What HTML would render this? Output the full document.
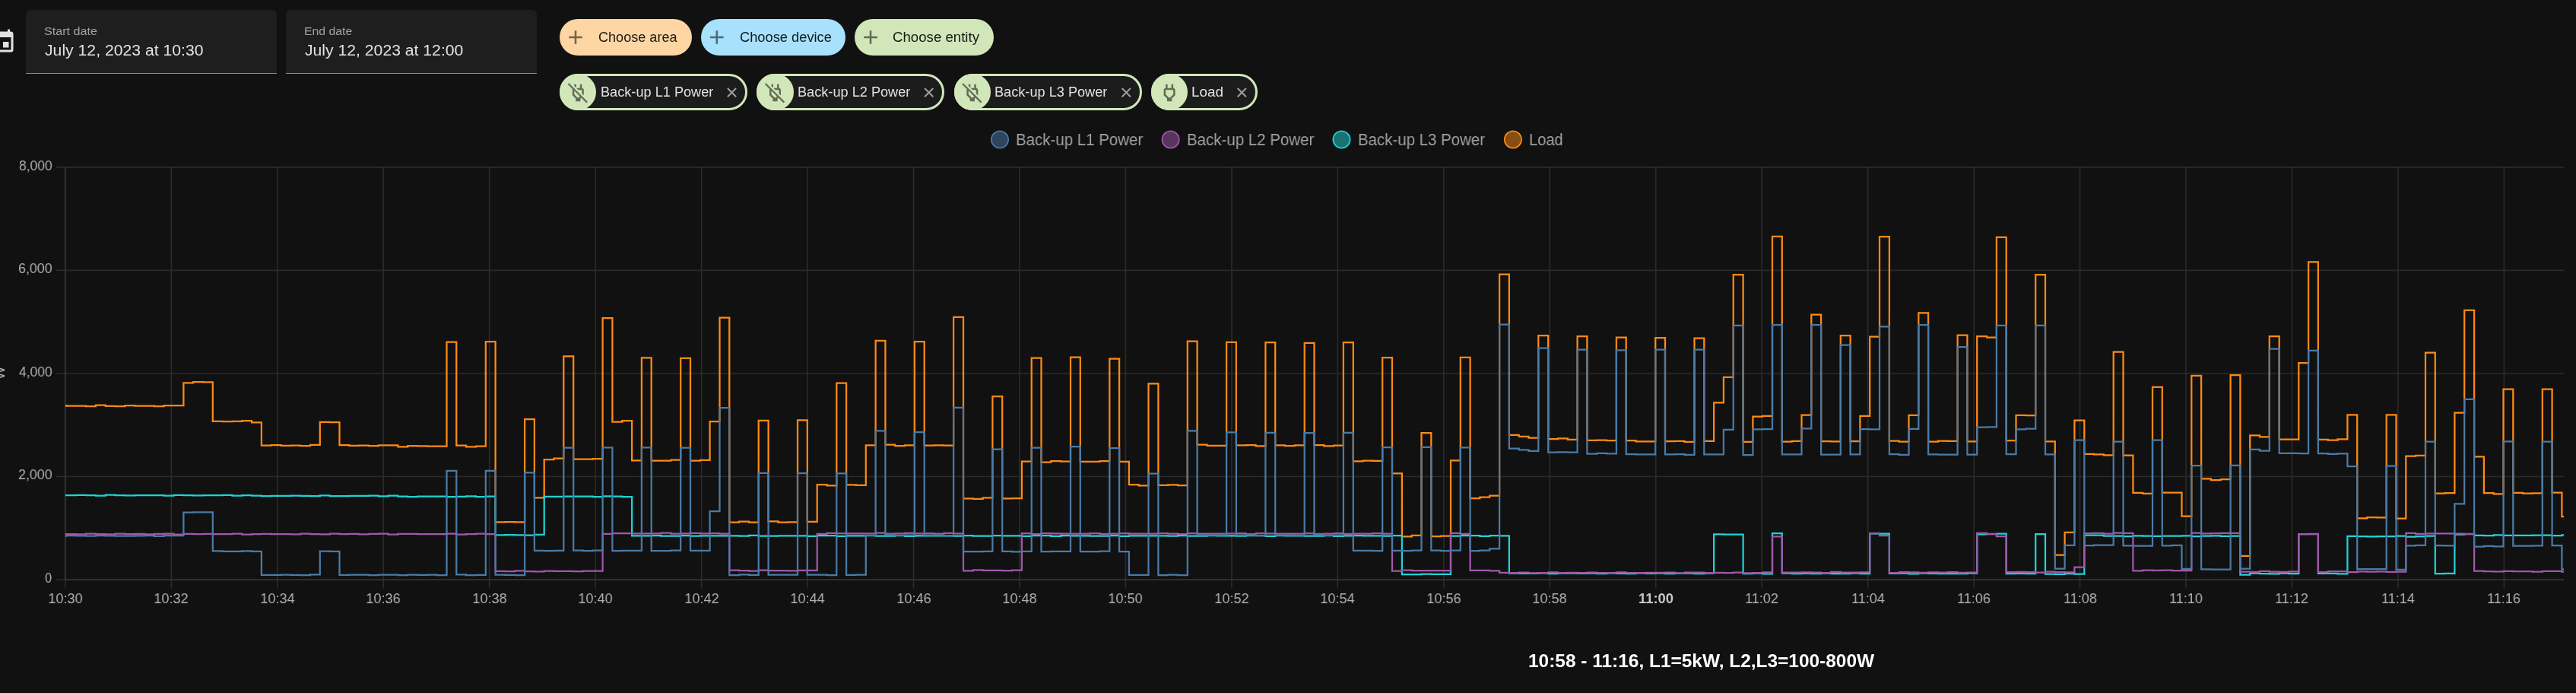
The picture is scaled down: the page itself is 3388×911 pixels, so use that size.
<!DOCTYPE html>
<html lang="en"><head><meta charset="utf-8"><title>History</title>
<style>
html,body{margin:0;padding:0;background:#111111;}
body{width:3388px;height:911px;position:relative;overflow:hidden;font-family:"Liberation Sans", sans-serif;}
.t{position:absolute;white-space:nowrap;line-height:1;transform-origin:0 0;will-change:transform;font-family:"Liberation Sans", sans-serif;}
.field{position:absolute;top:13px;height:83px;background:#1e1e1e;border-radius:6px 6px 0 0;border-bottom:1.5px solid #8d8d8d;box-sizing:content-box;}
.chip{position:absolute;height:48.4px;border-radius:24.2px;box-sizing:border-box;}
.echip{background:#1c1c1c;border:3.2px solid #d2e7b9;}
.ico{position:absolute;width:48.4px;height:48.4px;border-radius:50%;background:#d2e7b9;}
svg{position:absolute;left:0;top:0;overflow:visible;}
</style></head><body>
<svg width="36" height="36" viewBox="0 0 24 24" style="left:-14px;top:36.7px"><path fill="#e1e1e1" d="M19,19H5V8H19M16,1V3H8V1H6V3H5C3.89,3 3,3.89 3,5V19A2,2 0 0,0 5,21H19A2,2 0 0,0 21,19V5C21,3.89 20.1,3 19,3H18V1M17,12H12V17H17V12Z"/></svg>
<div class="field" style="left:33.9px;width:330.4px"></div>
<div class="field" style="left:375.9px;width:330.2px"></div>
<div class="chip" style="left:736.1px;top:24.7px;width:174.1px;background:#fed6a4"></div>
<div class="chip" style="left:921.8px;top:24.7px;width:190.5px;background:#a8e1fb"></div>
<div class="chip" style="left:1124px;top:24.7px;width:183px;background:#d2e7b9"></div>
<div class="chip echip" style="left:736.1px;top:96.6px;width:246.9px"></div>
<div class="ico" style="left:736.1px;top:96.6px"></div>
<div class="chip echip" style="left:995.3px;top:96.6px;width:246.3px"></div>
<div class="ico" style="left:995.3px;top:96.6px"></div>
<div class="chip echip" style="left:1254.6px;top:96.6px;width:247.0px"></div>
<div class="ico" style="left:1254.6px;top:96.6px"></div>
<div class="chip echip" style="left:1513.9px;top:96.6px;width:140.0px"></div>
<div class="ico" style="left:1513.9px;top:96.6px"></div>
<svg width="3388" height="210" viewBox="0 0 3388 210">
<path d="M748.2 49H765.8M757.0 40.2V57.8" stroke="#75634c" stroke-width="2.6" fill="none"/>
<path d="M934.0 49H951.6M942.8 40.2V57.8" stroke="#4e6874" stroke-width="2.6" fill="none"/>
<path d="M1136.2 49H1153.8M1145.0 40.2V57.8" stroke="#616a55" stroke-width="2.6" fill="none"/>
<path d="M956.9 116.1L968.1 127.3M968.1 116.1L956.9 127.3" stroke="#9c9c9c" stroke-width="2.1" fill="none"/>
<path d="M1216.1 116.1L1227.3 127.3M1227.3 116.1L1216.1 127.3" stroke="#9c9c9c" stroke-width="2.1" fill="none"/>
<path d="M1475.7 116.1L1486.9 127.3M1486.9 116.1L1475.7 127.3" stroke="#9c9c9c" stroke-width="2.1" fill="none"/>
<path d="M1627.7 116.1L1638.9 127.3M1638.9 116.1L1627.7 127.3" stroke="#9c9c9c" stroke-width="2.1" fill="none"/>
<g transform="translate(745.3 107.0) scale(1.25)"><path fill="#626c55" d="M22.11 21.46L2.39 1.73L1.11 3L6.25 8.14C6.1 8.41 6 8.7 6 9V14.5L9.5 18V21H14.5V18L15.31 17.2L20.84 22.73L22.11 21.46M13.09 16.59L12.67 17H11.33L10.91 16.59L8 13.67V9.89L13.89 15.78L13.09 16.59M12.2 9L8 4.8V3H10V7H14V3H16V7C17 7 18 8 18 9V14.5L17.8 14.69L16 12.89V9.09C16 9.06 15.95 9 15.92 9H12.2Z"/></g>
<g transform="translate(1004.5 107.0) scale(1.25)"><path fill="#626c55" d="M22.11 21.46L2.39 1.73L1.11 3L6.25 8.14C6.1 8.41 6 8.7 6 9V14.5L9.5 18V21H14.5V18L15.31 17.2L20.84 22.73L22.11 21.46M13.09 16.59L12.67 17H11.33L10.91 16.59L8 13.67V9.89L13.89 15.78L13.09 16.59M12.2 9L8 4.8V3H10V7H14V3H16V7C17 7 18 8 18 9V14.5L17.8 14.69L16 12.89V9.09C16 9.06 15.95 9 15.92 9H12.2Z"/></g>
<g transform="translate(1263.8 107.0) scale(1.25)"><path fill="#626c55" d="M22.11 21.46L2.39 1.73L1.11 3L6.25 8.14C6.1 8.41 6 8.7 6 9V14.5L9.5 18V21H14.5V18L15.31 17.2L20.84 22.73L22.11 21.46M13.09 16.59L12.67 17H11.33L10.91 16.59L8 13.67V9.89L13.89 15.78L13.09 16.59M12.2 9L8 4.8V3H10V7H14V3H16V7C17 7 18 8 18 9V14.5L17.8 14.69L16 12.89V9.09C16 9.06 15.95 9 15.92 9H12.2Z"/></g>
<g transform="translate(1523.1 107.0) scale(1.25)"><path fill="#626c55" d="M16 7V3H14V7H10V3H8V7C7 7 6 8 6 9V14.5L9.5 18V21H14.5V18L18 14.5V9C18 8 17 7 16 7M16 13.67L13.09 16.59L12.67 17H11.33L10.91 16.59L8 13.67V9.09C8 9.06 8.06 9 8.09 9H15.92C15.95 9 16 9.06 16 9.09V13.67Z"/></g>
<circle cx="1315.0" cy="183.5" r="11.2" fill="#4b7aa6" fill-opacity="0.5" stroke="#4b7aa6" stroke-width="1.6"/>
<circle cx="1539.6" cy="183.5" r="11.2" fill="#a058ab" fill-opacity="0.5" stroke="#a058ab" stroke-width="1.6"/>
<circle cx="1764.5" cy="183.5" r="11.2" fill="#1ed4d7" fill-opacity="0.5" stroke="#1ed4d7" stroke-width="1.6"/>
<circle cx="1989.9" cy="183.5" r="11.2" fill="#ff8a14" fill-opacity="0.5" stroke="#ff8a14" stroke-width="1.6"/>
</svg>
<svg width="3388" height="911" viewBox="0 0 3388 911">
<path d="M73.7 219.90H3372.1M73.7 355.42H3372.1M73.7 490.95H3372.1M73.7 626.48H3372.1M225.32 219.9V773.4M364.78 219.9V773.4M504.23 219.9V773.4M643.69 219.9V773.4M783.15 219.9V773.4M922.61 219.9V773.4M1062.07 219.9V773.4M1201.53 219.9V773.4M1340.98 219.9V773.4M1480.44 219.9V773.4M1619.90 219.9V773.4M1759.36 219.9V773.4M1898.82 219.9V773.4M2038.28 219.9V773.4M2177.73 219.9V773.4M2317.19 219.9V773.4M2456.65 219.9V773.4M2596.11 219.9V773.4M2735.57 219.9V773.4M2875.03 219.9V773.4M3014.48 219.9V773.4M3153.94 219.9V773.4M3293.40 219.9V773.4" stroke="#2b2b2b" stroke-width="1.6" fill="none"/>
<path d="M73.7 762.00H85.86M85.86 762.00V773.4" stroke="#2b2b2b" stroke-width="1.6" fill="none"/>
<path d="M85.86 219.9V762.00H3372.1" stroke="#393939" stroke-width="1.7" fill="none"/>
<path d="M85.9 533.2H87.5V533.7H100.3V533.6H113.2V534.0H126.0V532.7H138.8V533.9H151.6V534.1H164.4V533.0H177.3V533.7H190.1V533.5H202.9V534.1H215.7V533.1H228.5V533.2H241.4V503.4H254.2V502.0H267.0V502.4H279.8V553.9H292.6V554.1H305.5V553.9H318.3V553.0H331.1V555.4H343.9V585.7H356.7V585.2H369.6V585.9H382.4V585.7H395.2V586.1H408.0V584.9H420.8V554.9H433.7V555.2H446.5V585.0H459.3V585.8H472.1V585.7H484.9V586.1H497.8V585.3H510.6V585.3H523.4V587.4H536.2V586.0H549.0V586.4H561.9V586.6H574.7V586.7H587.5V449.6H600.3V585.7H613.1V587.3H626.0V586.5H638.8V449.0H651.6V686.3H664.4V686.0H677.2V686.3H690.1V551.1H702.9V654.3H715.7V604.0H728.5V602.7H741.3V468.3H754.2V603.5H767.0V603.7H779.8V603.1H792.6V418.1H805.4V554.7H818.3V553.2H831.1V605.3H843.9V470.4H856.7V605.6H869.5V605.5H882.4V604.7H895.2V470.9H908.0V605.5H920.8V604.9H933.6V554.1H946.5V417.7H959.3V686.5H972.1V685.6H984.9V686.5H997.7V552.8H1010.6V685.4H1023.4V686.5H1036.2V686.3H1049.0V552.3H1061.8V685.9H1074.7V637.0H1087.5V638.3H1100.3V503.5H1113.1V637.3H1125.9V637.9H1138.8V585.3H1151.6V447.8H1164.4V584.6H1177.2V586.0H1190.0V585.3H1202.9V449.0H1215.7V585.7H1228.5V585.3H1241.3V585.5H1254.1V416.9H1267.0V655.4H1279.8V655.8H1292.6V654.3H1305.4V521.2H1318.2V655.3H1331.1V655.2H1343.9V606.6H1356.7V470.5H1369.5V607.7H1382.3V606.2H1395.2V606.6H1408.0V469.5H1420.8V606.8H1433.6V606.9H1446.4V606.2H1459.3V471.6H1472.1V606.8H1484.9V637.1H1497.7V638.3H1510.5V504.3H1523.4V637.9H1536.2V637.3H1549.0V638.0H1561.8V448.7H1574.6V584.7H1587.5V585.8H1600.3V585.8H1613.1V449.9H1625.9V585.3H1638.7V585.2H1651.6V586.4H1664.4V450.2H1677.2V585.3H1690.0V586.1H1702.8V585.4H1715.7V450.8H1728.5V585.0H1741.3V586.3H1754.1V585.6H1766.9V450.0H1779.8V606.3H1792.6V605.7H1805.4V605.8H1818.2V470.0H1831.0V622.3H1843.9V705.4H1856.7V703.9H1869.5V569.1H1882.3V705.1H1895.1V704.7H1908.0V605.3H1920.8V469.9H1933.6V655.2H1946.4V653.7H1959.2V651.6H1972.1V360.5H1984.9V571.8H1997.7V573.9H2010.5V575.5H2023.3V441.0H2036.2V577.2H2049.0V576.4H2061.8V577.9H2074.6V442.2H2087.4V578.9H2100.3V578.6H2113.1V579.1H2125.9V443.6H2138.7V579.1H2151.5V580.4H2164.4V580.4H2177.2V444.2H2190.0V580.0H2202.8V579.8H2215.6V580.9H2228.5V444.5H2241.3V579.8H2254.1V529.4H2266.9V495.8H2279.7V361.0H2292.6V580.9H2305.4V547.5H2318.2V546.9H2331.0V310.9H2343.8V580.6H2356.7V579.8H2369.5V545.5H2382.3V413.7H2395.1V580.0H2407.9V580.4H2420.8V441.2H2433.6V580.2H2446.4V546.9H2459.2V442.6H2472.0V311.1H2484.9V579.6H2497.7V580.6H2510.5V545.9H2523.3V411.4H2536.1V580.6H2549.0V579.5H2561.8V579.8H2574.6V440.6H2587.4V580.4H2600.2V442.0H2613.1V443.5H2625.9V311.8H2638.7V579.0H2651.5V545.9H2664.3V546.0H2677.2V361.0H2690.0V580.3H2702.8V729.6H2715.6V699.8H2728.4V552.7H2741.3V596.9H2754.1V597.3H2766.9V598.3H2779.7V462.6H2792.5V598.7H2805.4V647.9H2818.2V648.9H2831.0V508.8H2843.8V647.7H2856.6V647.5H2869.5V678.5H2882.3V493.9H2895.1V629.4H2907.9V631.0H2920.7V630.1H2933.6V493.0H2946.4V730.9H2959.2V572.3H2972.0V574.3H2984.8V442.2H2997.7V577.6H3010.5V577.7H3023.3V477.1H3036.1V344.3H3048.9V577.8H3061.8V578.5H3074.6V577.3H3087.4V545.4H3100.2V681.3H3113.0V680.0H3125.9V680.4H3138.7V545.4H3151.5V681.5H3164.3V599.7H3177.1V598.9H3190.0V463.7H3202.8V648.5H3215.6V648.2H3228.4V542.6H3241.2V407.8H3254.1V600.3H3266.9V648.2H3279.7V649.4H3292.5V511.6H3305.3V647.9H3318.2V648.5H3331.0V648.3H3343.8V511.7H3356.6V647.5H3369.4V679.0H3372.1" stroke="#ff8a14" stroke-width="2.25" fill="none" stroke-linejoin="miter"/>
<path d="M85.9 651.1H87.5V651.2H100.3V650.9H113.2V651.2H126.0V651.5H138.8V650.7H151.6V651.2H164.4V651.3H177.3V651.1H190.1V651.1H202.9V651.0H215.7V651.6H228.5V650.9H241.4V651.0H254.2V651.4H267.0V651.1H279.8V651.2H292.6V650.9H305.5V651.5H318.3V651.2H331.1V651.5H343.9V652.2H356.7V651.9H369.6V651.9H382.4V651.7H395.2V651.9H408.0V652.2H420.8V651.4H433.7V652.0H446.5V652.0H459.3V651.8H472.1V651.8H484.9V651.7H497.8V652.3H510.6V651.6H523.4V652.5H536.2V653.0H549.0V652.6H561.9V652.7H574.7V652.5H587.5V653.0H600.3V652.8H613.1V652.3H626.0V653.0H638.8V652.7H651.6V703.3H664.4V703.2H677.2V703.4H690.1V703.7H702.9V702.9H715.7V652.8H728.5V652.9H741.3V652.6H754.2V652.7H767.0V652.5H779.8V653.1H792.6V652.4H805.4V652.5H818.3V653.0H831.1V704.3H843.9V704.4H856.7V704.2H869.5V704.7H882.4V704.5H895.2V704.0H908.0V704.7H920.8V704.4H933.6V704.3H946.5V704.3H959.3V704.4H972.1V704.7H984.9V703.9H997.7V704.5H1010.6V704.6H1023.4V704.3H1036.2V704.4H1049.0V704.3H1061.8V704.8H1074.7V704.2H1087.5V704.2H1100.3V704.8H1113.1V704.3H1125.9V704.4H1138.8V704.2H1151.6V704.7H1164.4V704.5H1177.2V704.0H1190.0V704.8H1202.9V704.4H1215.7V704.3H1228.5V704.3H1241.3V704.4H1254.1V704.7H1267.0V704.0H1279.8V704.5H1292.6V704.6H1305.4V704.2H1318.2V704.4H1331.1V704.3H1343.9V704.8H1356.7V704.2H1369.5V704.2H1382.3V704.8H1395.2V704.2H1408.0V704.4H1420.8V704.3H1433.6V704.6H1446.4V704.5H1459.3V704.0H1472.1V704.8H1484.9V704.4H1497.7V704.3H1510.5V704.4H1523.4V704.4H1536.2V704.7H1549.0V704.0H1561.8V704.5H1574.6V704.7H1587.5V704.2H1600.3V704.4H1613.1V704.3H1625.9V704.7H1638.7V704.2H1651.6V704.2H1664.4V704.8H1677.2V704.2H1690.0V704.4H1702.8V704.3H1715.7V704.6H1728.5V704.5H1741.3V704.0H1754.1V704.8H1766.9V704.4H1779.8V704.2H1792.6V704.4H1818.2V704.7H1831.0V704.0H1843.9V755.0H1856.7V755.2H1869.5V754.6H1882.3V754.9H1895.1V754.8H1908.0V704.7H1920.8V704.2H1933.6V704.2H1946.4V704.8H1959.2V704.2H1972.1V704.3H1984.9V753.7H1997.7V753.9H2010.5V753.8H2023.3V753.3H2036.2V754.1H2049.0V753.7H2061.8V753.5H2074.6V753.8H2087.4V753.7H2100.3V754.0H2113.1V753.3H2125.9V753.9H2138.7V754.0H2151.5V753.4H2164.4V753.8H2177.2V753.7H2190.0V754.0H2202.8V753.5H2228.5V754.2H2241.3V753.5H2254.1V702.4H2266.9V702.5H2279.7V702.6H2292.6V754.0H2305.4V753.5H2318.2V754.3H2331.0V701.0H2343.8V753.7H2356.7V754.0H2369.5V753.9H2382.3V754.1H2395.1V753.6H2407.9V754.1H2420.8V754.2H2433.6V753.6H2446.4V754.0H2459.2V701.4H2472.0V701.6H2484.9V753.8H2497.7V753.7H2510.5V754.4H2523.3V753.7H2536.1V753.9H2549.0V754.0H2561.8V754.0H2574.6V754.0H2587.4V753.6H2600.2V702.4H2613.1V702.0H2625.9V701.7H2638.7V754.1H2651.5V753.9H2664.3V754.1H2677.2V702.1H2690.0V754.7H2702.8V754.9H2715.6V754.2H2728.4V754.6H2741.3V703.5H2754.1V703.6H2766.9V704.5H2779.7V704.5H2792.5V705.1H2805.4V704.4H2818.2V704.6H2831.0V704.8H2843.8V704.7H2869.5V704.3H2882.3V705.1H2895.1V704.7H2907.9V704.4H2920.7V704.9H2933.6V704.7H2946.4V755.7H2959.2V753.6H2972.0V754.0H2984.8V754.3H2997.7V753.5H3010.5V754.0H3023.3V702.1H3036.1V702.1H3048.9V753.8H3061.8V753.8H3074.6V754.4H3087.4V704.8H3100.2V705.0H3113.0V705.3H3125.9V705.1H3138.7V705.1H3151.5V704.7H3164.3V705.5H3177.1V705.1H3190.0V704.7H3202.8V754.2H3215.6V753.9H3228.4V702.5H3241.2V702.2H3254.1V703.8H3266.9V704.0H3279.7V703.3H3292.5V703.9H3305.3V703.8H3318.2V703.8H3331.0V703.6H3343.8V703.6H3356.6V704.2H3369.4V703.4H3372.1" stroke="#1ed4d7" stroke-width="2.25" fill="none" stroke-linejoin="miter"/>
<path d="M85.9 702.0H87.5V702.0H100.3V702.4H113.2V701.5H126.0V702.1H138.8V702.4H151.6V701.7H164.4V702.0H177.3V701.9H190.1V702.4H202.9V701.8H215.7V701.7H228.5V702.6H241.4V701.8H254.2V702.0H267.0V701.9H279.8V702.2H292.6V702.2H305.5V701.5H318.3V702.5H331.1V702.1H343.9V701.8H356.7V702.1H369.6V702.0H382.4V702.4H395.2V701.5H408.0V702.1H420.8V702.4H433.7V701.7H446.5V702.1H459.3V701.9H472.1V702.4H484.9V701.8H497.8V701.7H510.6V702.6H523.4V701.8H536.2V701.9H549.0V702.0H561.9V702.2H574.7V702.2H587.5V701.5H600.3V702.5H613.1V702.1H626.0V701.7H638.8V702.1H651.6V750.9H664.4V751.2H677.2V750.4H690.1V751.0H702.9V751.3H715.7V750.5H728.5V750.9H741.3V750.8H754.2V751.2H767.0V750.7H779.8V750.6H792.6V701.8H805.4V701.0H818.3V701.1H831.1V701.3H843.9V701.4H856.7V701.3H869.5V700.7H882.4V701.7H895.2V701.3H908.0V700.9H920.8V701.3H933.6V701.2H946.5V701.5H959.3V749.6H972.1V750.2H984.9V750.5H997.7V749.6H1010.6V750.1H1023.4V750.1H1036.2V750.3H1049.0V749.9H1061.8V749.8H1074.7V701.8H1087.5V700.9H1100.3V701.1H1113.1V701.3H1125.9V701.3H1138.8V701.3H1151.6V700.7H1164.4V701.7H1177.2V701.3H1190.0V700.8H1202.9V701.4H1215.7V701.2H1228.5V701.5H1241.3V700.8H1254.1V701.3H1267.0V750.3H1279.8V749.3H1292.6V749.9H1305.4V749.9H1318.2V750.0H1331.1V749.6H1343.9V701.2H1356.7V702.1H1369.5V701.2H1382.3V701.3H1395.2V701.7H1408.0V701.5H1420.8V701.6H1433.6V701.0H1446.4V701.9H1459.3V701.6H1472.1V701.1H1484.9V701.7H1497.7V701.5H1510.5V701.7H1523.4V701.1H1536.2V701.6H1549.0V702.0H1561.8V701.0H1574.6V701.6H1600.3V701.6H1613.1V701.3H1625.9V701.2H1638.7V702.1H1651.6V701.2H1664.4V701.3H1677.2V701.7H1690.0V701.5H1702.8V701.6H1715.7V701.0H1728.5V701.9H1741.3V701.6H1754.1V701.0H1766.9V701.8H1779.8V701.5H1792.6V701.6H1805.4V701.1H1818.2V701.6H1831.0V750.5H1843.9V749.5H1856.7V750.2H1869.5V750.2H1882.3V750.1H1895.1V750.0H1908.0V700.9H1920.8V701.8H1933.6V749.8H1946.4V749.9H1959.2V750.4H1972.1V752.9H1984.9V753.0H1997.7V752.5H2010.5V753.3H2023.3V753.0H2036.2V752.4H2049.0V753.2H2061.8V752.9H2074.6V753.0H2087.4V752.6H2100.3V753.0H2113.1V753.4H2125.9V752.4H2138.7V753.0H2151.5V753.1H2164.4V752.9H2177.2V752.8H2190.0V752.7H2202.8V753.5H2215.6V752.6H2228.5V752.7H2241.3V753.3H2254.1V752.8H2266.9V753.0H2279.7V752.6H2292.6V753.3H2305.4V753.0H2318.2V752.4H2331.0V705.4H2343.8V752.5H2356.7V752.5H2369.5V752.3H2382.3V752.6H2395.1V753.0H2407.9V751.9H2420.8V752.6H2433.6V752.7H2446.4V752.4H2459.2V701.4H2472.0V704.2H2484.9V753.1H2497.7V752.2H2510.5V752.3H2523.3V752.9H2536.1V752.4H2549.0V752.5H2561.8V752.2H2574.6V752.9H2587.4V752.6H2600.2V700.9H2613.1V701.8H2625.9V705.1H2638.7V752.1H2651.5V751.9H2664.3V752.2H2677.2V752.5H2690.0V751.5H2702.8V752.2H2715.6V752.4H2728.4V745.7H2741.3V701.0H2754.1V700.8H2766.9V701.5H2779.7V700.7H2792.5V700.8H2805.4V750.3H2818.2V749.7H2831.0V749.9H2843.8V749.6H2856.6V750.2H2869.5V750.0H2882.3V700.5H2895.1V701.4H2907.9V701.0H2920.7V700.9H2933.6V700.9H2946.4V751.5H2959.2V751.9H2972.0V750.9H2984.8V751.6H2997.7V751.8H3010.5V751.3H3023.3V702.0H3036.1V701.9H3048.9V752.0H3061.8V751.2H3074.6V751.2H3087.4V752.0H3100.2V751.3H3113.0V751.5H3125.9V751.3H3138.7V751.8H3151.5V751.6H3164.3V700.9H3177.1V701.9H3190.0V701.4H3202.8V701.3H3215.6V701.3H3228.4V701.5H3241.2V701.8H3254.1V750.5H3266.9V751.2H3279.7V751.4H3292.5V750.8H3305.3V751.1H3318.2V751.0H3331.0V751.5H3343.8V750.8H3356.6V750.8H3369.4V751.6H3372.1" stroke="#a058ab" stroke-width="2.25" fill="none" stroke-linejoin="miter"/>
<path d="M85.9 704.5H87.5V704.2H100.3V704.4H113.2V704.7H126.0V704.1H138.8V704.4H151.6V704.5H177.3V704.3H190.1V704.2H202.9V704.8H215.7V704.2H241.4V673.5H254.2V673.4H267.0V673.4H279.8V724.4H292.6V724.9H305.5V724.8H318.3V724.3H331.1V724.8H343.9V755.8H356.7V755.9H369.6V755.5H382.4V755.8H395.2V756.1H408.0V755.4H420.8V724.7H433.7V724.8H446.5V755.8H459.3V755.7H472.1V755.6H484.9V756.2H497.8V755.6H523.4V756.0H536.2V755.7H549.0V755.8H561.9V755.5H574.7V756.0H587.5V618.9H600.3V755.4H613.1V756.0H626.0V755.8H638.8V618.9H651.6V755.6H664.4V755.8H677.2V756.1H690.1V621.3H702.9V723.9H715.7V724.0H728.5V723.8H741.3V588.5H754.2V723.7H767.0V724.2H779.8V723.7H792.6V588.3H805.4V724.1H818.3V723.8H831.1V723.9H843.9V588.3H856.7V724.1H869.5V724.0H882.4V723.5H895.2V588.7H908.0V723.9H933.6V672.0H946.5V536.1H959.3V756.1H972.1V755.4H984.9V755.8H997.7V621.8H1010.6V755.7H1023.4V755.7H1036.2V755.6H1049.0V622.0H1061.8V755.6H1074.7V755.6H1087.5V756.0H1100.3V622.4H1113.1V755.9H1125.9V755.7H1138.8V703.9H1151.6V566.3H1164.4V703.3H1177.2V703.9H1190.0V703.7H1202.9V568.0H1215.7V703.5H1228.5V703.7H1241.3V704.0H1254.1V535.9H1267.0V725.0H1279.8V725.1H1292.6V724.8H1305.4V590.7H1318.2V724.8H1331.1V725.3H1343.9V724.8H1356.7V588.7H1369.5V725.2H1382.3V724.8H1395.2V724.9H1408.0V587.0H1420.8V725.1H1433.6V725.0H1446.4V724.5H1459.3V589.2H1472.1V725.0H1484.9V755.8H1497.7V755.8H1510.5V622.5H1523.4V756.2H1536.2V755.5H1549.0V756.0H1561.8V566.4H1574.6V703.5H1587.5V703.6H1600.3V703.5H1613.1V568.3H1625.9V703.5H1638.7V703.4H1651.6V704.0H1664.4V568.8H1677.2V703.6H1690.0V703.5H1702.8V703.8H1715.7V569.0H1728.5V703.3H1741.3V703.9H1754.1V703.7H1766.9V568.8H1779.8V723.8H1792.6V723.8H1805.4V724.1H1818.2V588.2H1831.0V723.9H1843.9V724.1H1856.7V723.7H1869.5V587.9H1882.3V723.7H1895.1V724.1H1908.0V723.7H1920.8V588.3H1933.6V724.2H1946.4V723.7H1959.2V721.3H1972.1V426.6H1984.9V589.5H1997.7V591.3H2010.5V592.9H2023.3V457.7H2036.2V594.6H2049.0V594.4H2061.8V594.5H2074.6V459.6H2087.4V596.5H2100.3V595.9H2113.1V596.3H2125.9V460.4H2138.7V597.2H2151.5V597.4H2164.4V597.3H2177.2V459.7H2190.0V597.3H2202.8V597.2H2215.6V597.8H2228.5V459.7H2241.3V597.3H2254.1V597.4H2266.9V564.8H2279.7V427.9H2292.6V598.0H2305.4V564.4H2318.2V564.1H2331.0V427.2H2343.8V597.4H2356.7V597.4H2369.5V563.4H2382.3V427.2H2395.1V597.5H2407.9V597.7H2420.8V453.5H2433.6V597.4H2446.4V564.0H2459.2V564.3H2472.0V429.4H2484.9V597.2H2497.7V597.8H2510.5V563.9H2523.3V427.2H2536.1V597.4H2549.0V597.5H2561.8V597.5H2574.6V456.1H2587.4V597.7H2600.2V561.5H2613.1V561.3H2625.9V427.9H2638.7V597.1H2651.5V564.3H2664.3V563.7H2677.2V427.9H2690.0V597.4H2702.8V747.6H2715.6V716.8H2728.4V578.6H2741.3V717.0H2754.1V716.7H2766.9V716.6H2779.7V580.7H2792.5V717.4H2805.4V717.5H2818.2V717.7H2831.0V578.7H2843.8V717.3H2856.6V716.8H2869.5V747.8H2882.3V612.2H2895.1V748.3H2907.9V748.6H2920.7V748.5H2933.6V611.8H2946.4V747.6H2959.2V590.8H2972.0V592.6H2984.8V458.6H2997.7V595.9H3010.5V595.9H3023.3V596.0H3036.1V460.8H3048.9V596.2H3061.8V596.9H3074.6V596.3H3087.4V613.0H3100.2V748.0H3113.0V748.0H3125.9V748.0H3138.7V612.6H3151.5V748.8H3164.3V717.3H3177.1V716.9H3190.0V580.5H3202.8V717.2H3215.6V717.4H3228.4V662.4H3241.2V524.8H3254.1V718.5H3266.9V717.9H3279.7V718.3H3292.5V580.4H3305.3V717.7H3318.2V717.5H3331.0V717.4H3343.8V580.7H3356.6V717.0H3369.4V748.4H3372.1" stroke="#4b7aa6" stroke-width="2.25" fill="none" stroke-linejoin="miter"/>
</svg>
<div class="t" id="wl" style="left:-9.5px;top:499.2px;font-size:18.4px;color:#b2b2b2;transform:rotate(-90deg);transform-origin:0 0">W</div>
<div class="t" id="sl" style="left:58.14px;top:33.03px;font-size:15.20px;color:#a2a2a2;font-weight:400;transform:scaleX(1.0615)">Start date</div>
<div class="t" id="sv" style="left:59.00px;top:55.77px;font-size:20.00px;color:#e1e1e1;font-weight:400;transform:scaleX(1.0594)">July 12, 2023 at 10:30</div>
<div class="t" id="el" style="left:400.46px;top:33.03px;font-size:15.20px;color:#a2a2a2;font-weight:400;transform:scaleX(1.0390)">End date</div>
<div class="t" id="ev" style="left:401.30px;top:55.77px;font-size:20.00px;color:#e1e1e1;font-weight:400;transform:scaleX(1.0584)">July 12, 2023 at 12:00</div>
<div class="t" id="ca" style="left:786.90px;top:39.56px;font-size:18.00px;color:#1d1a16;font-weight:400;transform:scaleX(1.0049)">Choose area</div>
<div class="t" id="cd" style="left:972.58px;top:39.56px;font-size:18.00px;color:#0f1a20;font-weight:400;transform:scaleX(1.0153)">Choose device</div>
<div class="t" id="ce" style="left:1174.46px;top:39.56px;font-size:18.00px;color:#171b13;font-weight:400;transform:scaleX(1.0358)">Choose entity</div>
<div class="t" id="e1" style="left:789.79px;top:111.66px;font-size:18.00px;color:#e1e1e1;font-weight:400;transform:scaleX(1.0089)">Back-up L1 Power</div>
<div class="t" id="e2" style="left:1048.99px;top:111.66px;font-size:18.00px;color:#e1e1e1;font-weight:400;transform:scaleX(1.0089)">Back-up L2 Power</div>
<div class="t" id="e3" style="left:1308.29px;top:111.66px;font-size:18.00px;color:#e1e1e1;font-weight:400;transform:scaleX(1.0089)">Back-up L3 Power</div>
<div class="t" id="e4" style="left:1567.35px;top:111.66px;font-size:18.00px;color:#e1e1e1;font-weight:400;transform:scaleX(1.0500)">Load</div>
<div class="t" id="g1" style="left:1336.45px;top:174.40px;font-size:21.50px;color:#a2a2a2;font-weight:400;transform:scaleX(0.9520)">Back-up L1 Power</div>
<div class="t" id="g2" style="left:1561.05px;top:174.40px;font-size:21.50px;color:#a2a2a2;font-weight:400;transform:scaleX(0.9526)">Back-up L2 Power</div>
<div class="t" id="g3" style="left:1786.05px;top:174.40px;font-size:21.50px;color:#a2a2a2;font-weight:400;transform:scaleX(0.9509)">Back-up L3 Power</div>
<div class="t" id="g4" style="left:2011.47px;top:174.40px;font-size:21.50px;color:#a2a2a2;font-weight:400;transform:scaleX(0.9348)">Load</div>
<div class="t" id="y0" style="left:24.50px;top:208.62px;font-size:18.40px;color:#b2b2b2;font-weight:400;transform:scaleX(0.9500)">8,000</div>
<div class="t" id="y1" style="left:23.53px;top:344.14px;font-size:18.40px;color:#b2b2b2;font-weight:400;transform:scaleX(0.9711)">6,000</div>
<div class="t" id="y2" style="left:24.50px;top:479.67px;font-size:18.40px;color:#b2b2b2;font-weight:400;transform:scaleX(0.9500)">4,000</div>
<div class="t" id="y3" style="left:23.53px;top:615.19px;font-size:18.40px;color:#b2b2b2;font-weight:400;transform:scaleX(0.9711)">2,000</div>
<div class="t" id="y4" style="left:59.30px;top:750.72px;font-size:18.40px;color:#b2b2b2;font-weight:400;transform:scaleX(0.8900)">0</div>
<div class="t" id="x0" style="left:25.86px;top:778.02px;width:120px;text-align:center;font-size:18.40px;color:#b2b2b2;font-weight:400;transform-origin:50% 0;transform:scaleX(0.9850)">10:30</div>
<div class="t" id="x1" style="left:165.32px;top:778.02px;width:120px;text-align:center;font-size:18.40px;color:#b2b2b2;font-weight:400;transform-origin:50% 0;transform:scaleX(0.9850)">10:32</div>
<div class="t" id="x2" style="left:304.78px;top:778.02px;width:120px;text-align:center;font-size:18.40px;color:#b2b2b2;font-weight:400;transform-origin:50% 0;transform:scaleX(0.9850)">10:34</div>
<div class="t" id="x3" style="left:444.23px;top:778.02px;width:120px;text-align:center;font-size:18.40px;color:#b2b2b2;font-weight:400;transform-origin:50% 0;transform:scaleX(0.9850)">10:36</div>
<div class="t" id="x4" style="left:583.69px;top:778.02px;width:120px;text-align:center;font-size:18.40px;color:#b2b2b2;font-weight:400;transform-origin:50% 0;transform:scaleX(0.9850)">10:38</div>
<div class="t" id="x5" style="left:723.15px;top:778.02px;width:120px;text-align:center;font-size:18.40px;color:#b2b2b2;font-weight:400;transform-origin:50% 0;transform:scaleX(0.9850)">10:40</div>
<div class="t" id="x6" style="left:862.61px;top:778.02px;width:120px;text-align:center;font-size:18.40px;color:#b2b2b2;font-weight:400;transform-origin:50% 0;transform:scaleX(0.9850)">10:42</div>
<div class="t" id="x7" style="left:1002.07px;top:778.02px;width:120px;text-align:center;font-size:18.40px;color:#b2b2b2;font-weight:400;transform-origin:50% 0;transform:scaleX(0.9850)">10:44</div>
<div class="t" id="x8" style="left:1141.53px;top:778.02px;width:120px;text-align:center;font-size:18.40px;color:#b2b2b2;font-weight:400;transform-origin:50% 0;transform:scaleX(0.9850)">10:46</div>
<div class="t" id="x9" style="left:1280.98px;top:778.02px;width:120px;text-align:center;font-size:18.40px;color:#b2b2b2;font-weight:400;transform-origin:50% 0;transform:scaleX(0.9850)">10:48</div>
<div class="t" id="x10" style="left:1420.44px;top:778.02px;width:120px;text-align:center;font-size:18.40px;color:#b2b2b2;font-weight:400;transform-origin:50% 0;transform:scaleX(0.9850)">10:50</div>
<div class="t" id="x11" style="left:1559.90px;top:778.02px;width:120px;text-align:center;font-size:18.40px;color:#b2b2b2;font-weight:400;transform-origin:50% 0;transform:scaleX(0.9850)">10:52</div>
<div class="t" id="x12" style="left:1699.36px;top:778.02px;width:120px;text-align:center;font-size:18.40px;color:#b2b2b2;font-weight:400;transform-origin:50% 0;transform:scaleX(0.9850)">10:54</div>
<div class="t" id="x13" style="left:1838.82px;top:778.02px;width:120px;text-align:center;font-size:18.40px;color:#b2b2b2;font-weight:400;transform-origin:50% 0;transform:scaleX(0.9850)">10:56</div>
<div class="t" id="x14" style="left:1978.28px;top:778.02px;width:120px;text-align:center;font-size:18.40px;color:#b2b2b2;font-weight:400;transform-origin:50% 0;transform:scaleX(0.9850)">10:58</div>
<div class="t" id="x15" style="left:2117.73px;top:778.02px;width:120px;text-align:center;font-size:18.40px;color:#c8c8c8;font-weight:700;transform-origin:50% 0;transform:scaleX(1.0000)">11:00</div>
<div class="t" id="x16" style="left:2257.19px;top:778.02px;width:120px;text-align:center;font-size:18.40px;color:#b2b2b2;font-weight:400;transform-origin:50% 0;transform:scaleX(0.9850)">11:02</div>
<div class="t" id="x17" style="left:2396.65px;top:778.02px;width:120px;text-align:center;font-size:18.40px;color:#b2b2b2;font-weight:400;transform-origin:50% 0;transform:scaleX(0.9850)">11:04</div>
<div class="t" id="x18" style="left:2536.11px;top:778.02px;width:120px;text-align:center;font-size:18.40px;color:#b2b2b2;font-weight:400;transform-origin:50% 0;transform:scaleX(0.9850)">11:06</div>
<div class="t" id="x19" style="left:2675.57px;top:778.02px;width:120px;text-align:center;font-size:18.40px;color:#b2b2b2;font-weight:400;transform-origin:50% 0;transform:scaleX(0.9850)">11:08</div>
<div class="t" id="x20" style="left:2815.03px;top:778.02px;width:120px;text-align:center;font-size:18.40px;color:#b2b2b2;font-weight:400;transform-origin:50% 0;transform:scaleX(0.9850)">11:10</div>
<div class="t" id="x21" style="left:2954.48px;top:778.02px;width:120px;text-align:center;font-size:18.40px;color:#b2b2b2;font-weight:400;transform-origin:50% 0;transform:scaleX(0.9850)">11:12</div>
<div class="t" id="x22" style="left:3093.94px;top:778.02px;width:120px;text-align:center;font-size:18.40px;color:#b2b2b2;font-weight:400;transform-origin:50% 0;transform:scaleX(0.9850)">11:14</div>
<div class="t" id="x23" style="left:3233.40px;top:778.02px;width:120px;text-align:center;font-size:18.40px;color:#b2b2b2;font-weight:400;transform-origin:50% 0;transform:scaleX(0.9850)">11:16</div>
<div class="t" id="an" style="left:2009.90px;top:856.95px;font-size:24.40px;color:#ffffff;font-weight:700;transform:scaleX(1.0020)">10:58 - 11:16, L1=5kW, L2,L3=100-800W</div>
</body></html>
